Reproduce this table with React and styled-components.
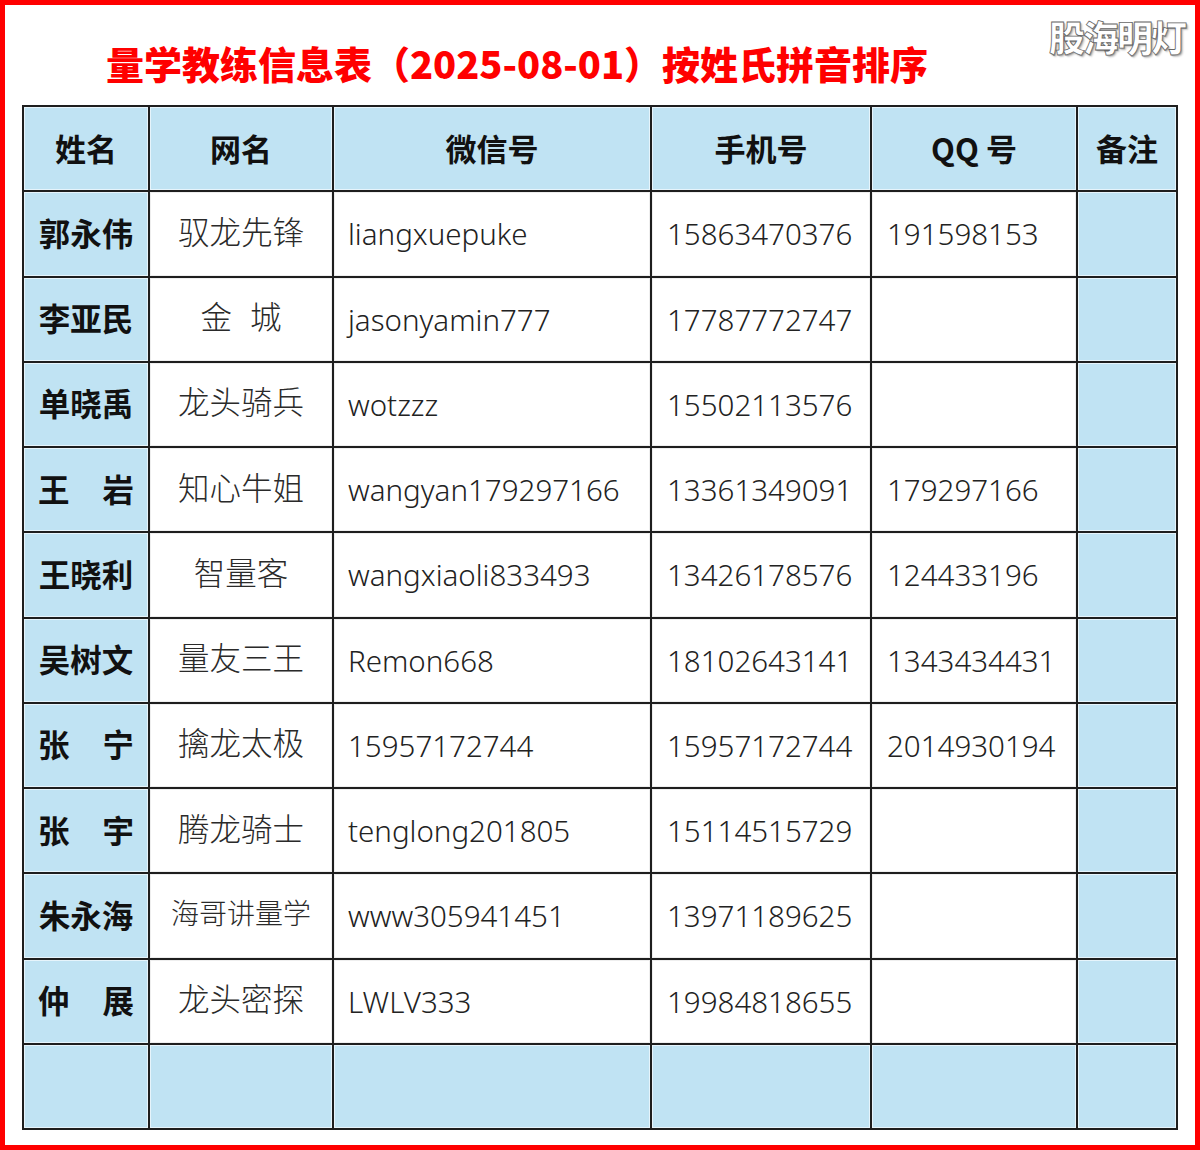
import React from 'react'
import styled, { createGlobalStyle } from 'styled-components'

const GlobalStyle = createGlobalStyle`
  html, body {
    margin: 0;
    padding: 0;
    background: #fff;
  }
  * { box-sizing: border-box; }
`;

const Page = styled.div`
  position: relative;
  width: 1200px;
  height: 1150px;
  border: 5px solid #ff0000;
  background: #fff;
  font-family: "Noto Sans CJK SC", "Noto Sans", sans-serif;
  padding: 0 17px;
`;

const Title = styled.h1`
  margin: 0;
  padding: 35px 166px 0 0;
  height: 100px;
  text-align: center;
  color: #ff0000;
  font-size: 38px;
  line-height: 46px;
  font-weight: 900;
  letter-spacing: 0;
`;

const Watermark = styled.div`
  position: absolute;
  top: 8px;
  right: 10px;
  font-size: 36px;
  line-height: 46px;
  font-weight: 900;
  color: #fff;
  letter-spacing: -2px;
  -webkit-text-stroke: 0.8px #666;
  text-shadow: 1px 1px 1px #999, 2px 2px 2px rgba(0,0,0,0.2);
`;

const Grid = styled.div`
  display: grid;
  grid-template-columns: 126px 184px 318px 220px 206px 100px;
  grid-auto-rows: 85.25px;
  width: 1156px;
  border-left: 2px solid #1e1e1e;
  border-top: 2px solid #1e1e1e;
`;

const Cell = styled.div`
  display: flex;
  align-items: center;
  border-right: 2px solid #1e1e1e;
  border-bottom: 2px solid #1e1e1e;
  background: ${p => (p.$blue ? '#c0e3f3' : '#fff')};
  box-shadow: ${p => (p.$blue ? 'inset 0 0 0 1px #e6f4fb' : 'inset 0 0 0 1px #eee')};
  color: #1a1a1a;
  overflow: hidden;
  white-space: nowrap;
`;

const HeadCell = styled(Cell)`
  justify-content: center;
  font-size: 31px;
  font-weight: 700;
  color: #111;
  padding-bottom: 2px;
`;

const NameCell = styled(Cell)`
  justify-content: ${p => (p.$spread ? 'space-between' : 'center')};
  padding: 0 14px 4px 14px;
  font-size: 31.5px;
  font-weight: 700;
  color: #111;
`;

const NickCell = styled(Cell)`
  justify-content: center;
  gap: ${p => (p.$gap ? '18px' : '0')};
  font-size: ${p => (p.$small ? '28px' : '31.5px')};
  font-weight: 300;
  color: #2a2a2a;
  padding-bottom: 8px;
`;

const TextCell = styled(Cell)`
  padding: 0 0 0 ${p => p.$pad || 14}px;
  font-family: "Noto Sans", "Noto Sans CJK SC", sans-serif;
  font-size: 29.5px;
  font-weight: 300;
  color: #222;
`;

const headers = ['姓名', '网名', '微信号', '手机号', 'QQ 号', '备注'];

const rows = [
  { name: ['郭永伟'], nick: ['驭龙先锋'], wx: 'liangxuepuke', phone: '15863470376', qq: '191598153' },
  { name: ['李亚民'], nick: ['金', '城'], wx: 'jasonyamin777', phone: '17787772747', qq: '' },
  { name: ['单晓禹'], nick: ['龙头骑兵'], wx: 'wotzzz', phone: '15502113576', qq: '' },
  { name: ['王', '岩'], nick: ['知心牛姐'], wx: 'wangyan179297166', phone: '13361349091', qq: '179297166' },
  { name: ['王晓利'], nick: ['智量客'], wx: 'wangxiaoli833493', phone: '13426178576', qq: '124433196' },
  { name: ['吴树文'], nick: ['量友三王'], wx: 'Remon668', phone: '18102643141', qq: '1343434431' },
  { name: ['张', '宁'], nick: ['擒龙太极'], wx: '15957172744', phone: '15957172744', qq: '2014930194' },
  { name: ['张', '宇'], nick: ['腾龙骑士'], wx: 'tenglong201805', phone: '15114515729', qq: '' },
  { name: ['朱永海'], nick: ['海哥讲量学'], wx: 'www305941451', phone: '13971189625', qq: '' },
  { name: ['仲', '展'], nick: ['龙头密探'], wx: 'LWLV333', phone: '19984818655', qq: '' },
];

export default function App() {
  return (
    <Page>
      <GlobalStyle />
      <Title>量学教练信息表（2025-08-01）按姓氏拼音排序</Title>
      <Watermark>股海明灯</Watermark>
      <Grid>
        {headers.map(h => (
          <HeadCell key={h} $blue>{h}</HeadCell>
        ))}
        {rows.map((r, i) => (
          <React.Fragment key={i}>
            <NameCell $blue $spread={r.name.length > 1}>
              {r.name.map(n => <span key={n}>{n}</span>)}
            </NameCell>
            <NickCell $gap={r.nick.length > 1} $small={r.nick[0].length > 4}>
              {r.nick.map(n => <span key={n}>{n}</span>)}
            </NickCell>
            <TextCell>{r.wx}</TextCell>
            <TextCell $pad={15}>{r.phone}</TextCell>
            <TextCell $pad={15}>{r.qq}</TextCell>
            <Cell $blue />
          </React.Fragment>
        ))}
        {headers.map(h => (
          <Cell key={'e' + h} $blue />
        ))}
      </Grid>
    </Page>
  )
}
